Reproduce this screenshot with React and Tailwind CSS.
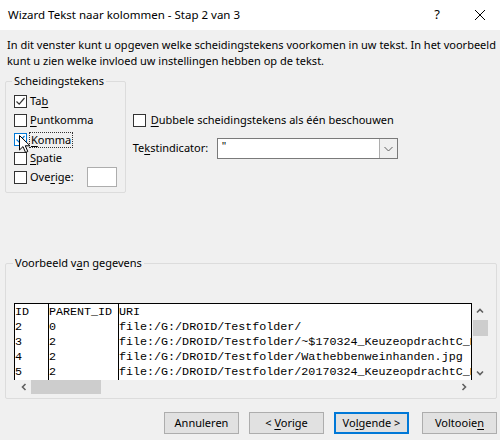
// Excel "Text to Columns" wizard, step 2 of 3.

const ui = { fontFamily: '"Segoe UI", "Noto Sans", "Liberation Sans", sans-serif' };
const mono = { fontFamily: '"Courier New", "Liberation Mono", monospace' };

function U({ children }) {
  return <span className="underline underline-offset-2">{children}</span>;
}

function Check({ checked, hover }) {
  return (
    <span
      className={`w-[13px] h-[13px] border bg-white flex items-center justify-center shrink-0 ${
        hover ? 'border-[#0078d7]' : 'border-[#333]'
      }`}
    >
      {checked && (
        <svg width="11" height="11" viewBox="0 0 11 11">
          <path d="M1.5 5.5 L4.2 8.2 L9.5 2" fill="none" stroke={hover ? '#0078d7' : '#333'} strokeWidth="1.2" />
        </svg>
      )}
    </span>
  );
}

function Button({ children, primary }) {
  return (
    <button
      className={`w-[75px] h-[22px] bg-[#e1e1e1] text-[11px] text-[#000] whitespace-nowrap flex items-center justify-center ${
        primary ? 'border-2 border-[#0078d7]' : 'border border-[#adadad]'
      }`}
    >
      <span>{children}</span>
    </button>
  );
}

const rows = [
  ['ID', 'PARENT_ID', 'URI'],
  ['2', '0', 'file:/G:/DROID/Testfolder/'],
  ['3', '2', 'file:/G:/DROID/Testfolder/~$170324_KeuzeopdrachtC_Kennis'],
  ['4', '2', 'file:/G:/DROID/Testfolder/Wathebbenweinhanden.jpg'],
  ['5', '2', 'file:/G:/DROID/Testfolder/20170324_KeuzeopdrachtC_Kennis'],
];

export default function App() {
  return (
    <div className="w-[500px] h-[440px] bg-[#f0f0f0] text-[11px] text-black overflow-hidden flex flex-col" style={ui}>
      {/* title bar */}
      <div className="h-[30px] bg-white flex items-center shrink-0">
        <span className="pl-[8px] text-[11.5px] flex-1">Wizard Tekst naar kolommen - Stap 2 van 3</span>
        <span className="w-[20px] text-center text-[13px] mr-[27px]">?</span>
        <svg width="12" height="12" viewBox="0 0 12 12" className="mr-[14px]">
          <path d="M1 1 L11 11 M11 1 L1 11" stroke="#000" strokeWidth="1" />
        </svg>
      </div>

      <div className="px-[7px] pt-[7px] leading-[16px] whitespace-nowrap">
        <p>In dit venster kunt u opgeven welke scheidingstekens voorkomen in uw tekst. In het voorbeeld</p>
        <p>kunt u zien welke invloed uw instellingen hebben op de tekst.</p>
      </div>

      <div className="flex mt-[5px] pl-[5px]">
        {/* separators group */}
        <fieldset className="w-[119px] h-[119px] border border-[#dcdcdc] rounded-[2px] px-[8px] pt-[4px]">
          <legend className="px-[2px] -ml-[2px] leading-[14px]">Scheidingstekens</legend>
          <div className="flex flex-col">
            <label className="flex items-center gap-[3px] h-[19px]">
              <Check checked />
              <span>Ta<U>b</U></span>
            </label>
            <label className="flex items-center gap-[3px] h-[19px]">
              <Check />
              <span><U>P</U>untkomma</span>
            </label>
            <label className="relative flex items-center gap-[3px] h-[19px]">
              <Check checked hover />
              <span className="border border-dotted border-[#333] px-[1px] leading-[14px] -ml-[1px]"><U>K</U>omma</span>
              <svg width="12" height="19" viewBox="0 0 12 19" className="absolute left-[5px] top-[5px]">
                <path d="M0.5 0.5 L0.5 15 L4 11.6 L6.6 17.5 L8.8 16.5 L6.3 10.8 L11 10.8 Z" fill="#fff" stroke="#000" strokeWidth="1" />
              </svg>
            </label>
            <label className="flex items-center gap-[3px] h-[18px]">
              <Check />
              <span><U>S</U>patie</span>
            </label>
            <label className="flex items-center gap-[3px] h-[20px]">
              <Check />
              <span>Ove<U>r</U>ige:</span>
              <span className="w-[30px] h-[20px] bg-white border border-[#adadad] ml-[10px]" />
            </label>
          </div>
        </fieldset>

        <div className="ml-[7px] pt-[37px] flex flex-col">
          <label className="flex items-center gap-[5px] h-[19px]">
            <Check />
            <span><U>D</U>ubbele scheidingstekens als één beschouwen</span>
          </label>
          <div className="flex items-center mt-[8px]">
            <span className="w-[84px]">Te<U>k</U>stindicator:</span>
            <div className="w-[181px] h-[21px] bg-white border border-[#7a7a7a] flex">
              <span className="flex-1 pl-[4px] leading-[14px]">"</span>
              <span className="w-[18px] border-l border-[#adadad] bg-[#f0f0f0] flex items-center justify-center">
                <svg width="9" height="6" viewBox="0 0 9 6">
                  <path d="M0.5 1 L4.5 5 L8.5 1" fill="none" stroke="#606060" strokeWidth="1" />
                </svg>
              </span>
            </div>
          </div>
        </div>
      </div>

      {/* preview group */}
      <fieldset className="min-w-0 ml-[5px] mr-[3px] mt-[63px] h-[143px] border border-[#dcdcdc] rounded-[2px] pl-[8px] pr-[8px] pt-[33px]">
        <legend className="px-[2px] -ml-[1px] leading-[14px]">Voorbeeld v<U>a</U>n gegevens</legend>
        <div className="flex">
          <div className="flex-1 min-w-0 flex flex-col">
            <div className="h-[77px] bg-white flex overflow-hidden border-t border-black" style={mono}>
              <div className="w-[35px] pt-[1px] border-l border-r border-black shrink-0">
                {rows.map((r, i) => (
                  <div key={i} className="h-[15px] leading-[15px] text-[11.7px]">{r[0]}</div>
                ))}
              </div>
              <div className="w-[70px] pt-[1px] border-r border-black shrink-0">
                {rows.map((r, i) => (
                  <div key={i} className="h-[15px] leading-[15px] text-[11.7px]">{r[1]}</div>
                ))}
              </div>
              <div className="flex-1 min-w-0 pt-[1px] border-r border-black overflow-hidden">
                {rows.map((r, i) => (
                  <div key={i} className="h-[15px] leading-[15px] text-[11.7px] whitespace-nowrap">{r[2]}</div>
                ))}
              </div>
            </div>
            {/* horizontal scrollbar */}
            <div className="h-[14px] bg-[#f0f0f0] flex items-center">
              <svg width="8" height="8" viewBox="0 0 8 8" className="ml-[6px]">
                <path d="M5.5 1 L2.5 4 L5.5 7" fill="none" stroke="#606060" strokeWidth="1.6" />
              </svg>
              <span className="w-[70px] h-[14px] bg-[#cdcdcd] ml-[3px]" />
              <span className="flex-1" />
              <svg width="8" height="8" viewBox="0 0 8 8" className="mr-[4px]">
                <path d="M2.5 1 L5.5 4 L2.5 7" fill="none" stroke="#606060" strokeWidth="1.6" />
              </svg>
            </div>
          </div>
          {/* vertical scrollbar */}
          <div className="w-[16px] h-[77px] flex flex-col items-center shrink-0">
            <svg width="8" height="8" viewBox="0 0 8 8" className="mt-[4px]">
              <path d="M1 5.5 L4 2.5 L7 5.5" fill="none" stroke="#606060" strokeWidth="1.6" />
            </svg>
            <span className="w-[15px] h-[16px] bg-[#cdcdcd] mt-[5px]" />
            <span className="flex-1" />
            <svg width="8" height="8" viewBox="0 0 8 8" className="mb-[3px]">
              <path d="M1 2.5 L4 5.5 L7 2.5" fill="none" stroke="#606060" strokeWidth="1.6" />
            </svg>
          </div>
        </div>
      </fieldset>

      <div className="flex justify-end pr-[3px] mt-[13px]">
        <Button>Annuleren</Button>
        <span className="w-[10px]" />
        <Button>&lt; <U>V</U>orige</Button>
        <span className="w-[10px]" />
        <Button primary>Vo<U>l</U>gende &gt;</Button>
        <span className="w-[13px]" />
        <Button>Voltooie<U>n</U></Button>
      </div>
    </div>
  );
}
